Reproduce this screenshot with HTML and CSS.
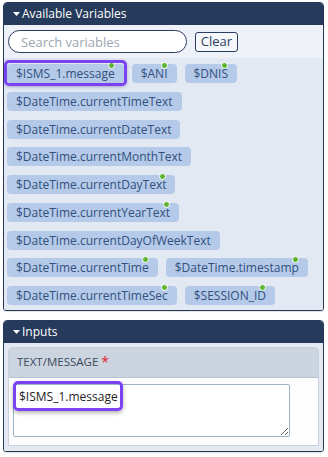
FILE: index.html
```html
<!DOCTYPE html>
<html>
<head>
<meta charset="utf-8">
<link rel="stylesheet" href="styles.css">
</head>
<body>
<section class="panel">
  <header class="panel-head">
    <svg class="caret" width="7" height="4" viewBox="0 0 7 4"><path d="M0 0H7L3.5 4Z" fill="#fff"/></svg>
    <span>Available Variables</span>
  </header>
  <div class="search-row">
    <input class="search" type="text" placeholder="Search variables">
    <button class="clear" type="button">Clear</button>
  </div>
  <div class="chips">
    <span class="chip">$ISMS_1.message<i class="dot"></i><b class="hl hl-chip"></b></span>
    <span class="chip">$ANI<i class="dot"></i></span>
    <span class="chip">$DNIS<i class="dot"></i></span>
    <span class="chip">$DateTime.currentTimeText</span>
    <span class="chip">$DateTime.currentDateText</span>
    <span class="chip">$DateTime.currentMonthText</span>
    <span class="chip">$DateTime.currentDayText<i class="dot"></i></span>
    <span class="chip">$DateTime.currentYearText<i class="dot"></i></span>
    <span class="chip">$DateTime.currentDayOfWeekText</span>
    <span class="chip">$DateTime.currentTime<i class="dot"></i></span>
    <span class="chip">$DateTime.timestamp<i class="dot"></i></span>
    <span class="chip">$DateTime.currentTimeSec<i class="dot"></i></span>
    <span class="chip">$SESSION_ID<i class="dot"></i></span>
  </div>
</section>

<section class="panel panel-inputs">
  <header class="panel-head">
    <svg class="caret" width="7" height="4" viewBox="0 0 7 4"><path d="M0 0H7L3.5 4Z" fill="#fff"/></svg>
    <span>Inputs</span>
  </header>
  <div class="inputs-body">
    <div class="field">
      <div class="field-label">TEXT/MESSAGE <span class="req">*</span></div>
      <div class="field-body">
        <div class="ta-wrap">
          <textarea class="ta">$ISMS_1.message</textarea>
          <b class="hl hl-ta"></b>
        </div>
      </div>
    </div>
  </div>
</section>
</body>
</html>
```

FILE: styles.css
```css
* { box-sizing: border-box; }

html, body {
  margin: 0;
  padding: 0;
  background: #ffffff;
}

body {
  width: 328px;
  height: 457px;
  padding-top: 2px;
  font-family: "Open Sans", "Liberation Sans", sans-serif;
  overflow: hidden;
}

.panel {
  width: 321px;
  margin-left: 3px;
  border: 1px solid #253858;
  border-radius: 4px 4px 3px 3px;
  overflow: hidden;
  box-shadow: 0 1px 1px rgba(0, 0, 0, 0.12);
}

.panel-inputs {
  margin-top: 9px;
}

.panel-head {
  height: 22px;
  background: #263a5b;
  color: #ffffff;
  font-size: 12px;
  display: flex;
  align-items: center;
  gap: 2px;
  padding-left: 9px;
  padding-bottom: 1px;
}

.caret {
  display: block;
  margin-top: 1px;
}

.search-row {
  background: #eef1f7;
  display: flex;
  align-items: center;
  gap: 8px;
  padding: 5px 4px 5px 4px;
}

.search {
  width: 179px;
  height: 23px;
  border: 1px solid #2b3e60;
  border-radius: 12px;
  background: #ffffff;
  padding: 0 0 0 12px;
  font-family: inherit;
  font-size: 13px;
  color: #333;
  outline: none;
}

.search::placeholder {
  color: #9ca5b1;
}

.clear {
  width: 43px;
  height: 20px;
  border: 1px solid #2b3e60;
  border-radius: 3px;
  background: #f6f7fa;
  color: #2b3e60;
  font-family: inherit;
  font-size: 13px;
  padding: 0;
  line-height: 17px;
}

.chips {
  background: #e3e9f3;
  display: flex;
  flex-wrap: wrap;
  align-content: flex-start;
  column-gap: 8px;
  row-gap: 8.75px;
  padding: 6px 4px 5px 3px;
}

.chip {
  position: relative;
  height: 19px;
  line-height: 19px;
  padding: 0 9px;
  background: #b4cae8;
  color: #33507e;
  font-size: 12px;
  border-radius: 4px;
  white-space: nowrap;
}

.dot {
  position: absolute;
  right: 9px;
  top: -2px;
  width: 7px;
  height: 7px;
  border-radius: 50%;
  background: #5db332;
  border: 1px solid #ffffff;
}

.hl {
  position: absolute;
  border: 3px solid #7a42f0;
  border-radius: 5px;
  pointer-events: none;
}

.hl-chip {
  top: -4px;
  left: -3px;
  right: -3px;
  bottom: -3px;
  box-shadow: 0 1px 3px rgba(60, 40, 120, 0.35);
}

.inputs-body {
  background: #e4e9f1;
  padding: 4px 4px 5px 4px;
}

.field {
  border: 1px solid #c7d0dc;
  border-radius: 4px 4px 0 0;
  overflow: hidden;
}

.field-label {
  height: 30px;
  background: #ccd4e0;
  border-bottom: 1px solid #b8c3d2;
  color: #3a4a5d;
  font-size: 11.5px;
  line-height: 28px;
  padding-left: 8px;
}

.req {
  color: #e1262c;
  font-size: 14px;
  vertical-align: -1px;
}

.field-body {
  background: #fdfdfd;
  padding: 6px 4px 8px 4px;
}

.ta-wrap {
  position: relative;
  width: 277px;
  height: 53px;
}

.ta {
  display: block;
  width: 277px;
  height: 53px;
  border: 1px solid #9db1ca;
  border-radius: 2px;
  background: #ffffff;
  font-family: inherit;
  font-size: 12px;
  line-height: 18px;
  color: #1e1e1e;
  padding: 3px 5px;
  margin: 0;
  outline: none;
}

.hl-ta {
  top: -3px;
  left: 0;
  width: 110px;
  height: 30px;
  box-shadow: 0 2px 4px rgba(0, 0, 0, 0.3);
}
```
